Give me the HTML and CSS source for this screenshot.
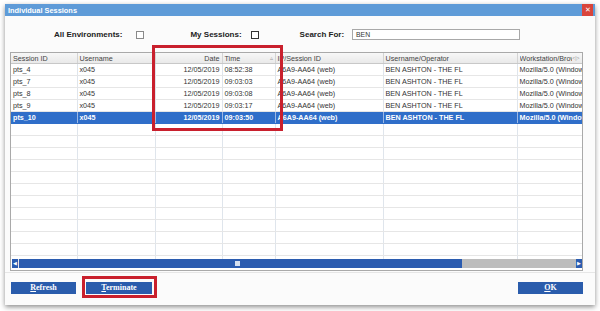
FILE: index.html
```html
<!DOCTYPE html>
<html lang="en">
<head>
  <meta charset="UTF-8">
  <meta name="viewport" content="width=device-width, initial-scale=1.0">
  <title>Individual Sessions</title>
  <link rel="stylesheet" href="styles.css">
</head>
<body>
  <!-- Dialog window -->
  <div class="window">
    <div class="titlebar">
      <span class="title">Individual Sessions</span>
      <span class="close">&#x2715;</span>
    </div>

    <!-- Filter options -->
    <div class="options">
      <label class="opt-label all-env">All Environments:</label>
      <span class="checkbox"></span>
      <label class="opt-label my-sessions">My Sessions:</label>
      <span class="checkbox dark"></span>
      <label class="opt-label search-label">Search For:</label>
      <div class="search-box">BEN</div>
    </div>

    <!-- Sessions grid -->
    <div class="grid">
      <div class="grid-body">
        <table class="sessions">
          <colgroup>
            <col style="width:66px">
            <col style="width:78px">
            <col style="width:67px">
            <col style="width:53px">
            <col style="width:108px">
            <col style="width:134px">
            <col style="width:65px">
          </colgroup>
          <thead>
            <tr>
              <th>Session ID</th>
              <th>Username</th>
              <th class="right">Date</th>
              <th>Time <span class="sort">&#x25B5;</span></th>
              <th>IP/Session ID</th>
              <th>Username/Operator</th>
              <th><div class="ws"><span class="ws-text">Workstation/Browser</span><span class="resize">&lt;|&gt;</span></div></th>
            </tr>
          </thead>
          <tbody id="rows"></tbody>
        </table>
      </div>
      <div class="hscroll">
        <span class="arrow left">&#x25C0;</span>
        <div class="thumb"><span class="grip"></span></div>
        <div class="track"></div>
        <span class="arrow right">&#x25B6;</span>
      </div>
    </div>

    <!-- Buttons -->
    <div class="footer">
      <button class="btn refresh"><u>R</u>efresh</button>
      <button class="btn terminate"><u>T</u>erminate</button>
      <button class="btn ok"><u>O</u>K</button>
    </div>
  </div>

  <!-- Annotation boxes -->
  <div class="mark mark-datetime"></div>
  <div class="mark mark-terminate"></div>

  <script>
    var sessions = [
      ['pts_4', 'x045', '12/05/2019', '08:52:38'],
      ['pts_7', 'x045', '12/05/2019', '09:03:03'],
      ['pts_8', 'x045', '12/05/2019', '09:03:08'],
      ['pts_9', 'x045', '12/05/2019', '09:03:17'],
      ['pts_10', 'x045', '12/05/2019', '09:03:50']
    ];
    var tbody = document.getElementById('rows');
    var html = '';
    sessions.forEach(function (s, i) {
      var cls = i === sessions.length - 1 ? ' class="selected"' : '';
      html += '<tr' + cls + '><td>' + s[0] + '</td><td>' + s[1] + '</td>' +
        '<td class="right">' + s[2] + '</td><td>' + s[3] + '</td>' +
        '<td>A6A9-AA64 (web)</td><td>BEN ASHTON - THE FL</td>' +
        '<td>Mozilla/5.0 (Window</td></tr>';
    });
    // empty filler rows
    for (var i = 0; i < 12; i++) {
      html += '<tr class="empty"><td></td><td></td><td></td><td></td><td></td><td></td><td></td></tr>';
    }
    tbody.innerHTML = html;
  </script>
</body>
</html>
```

FILE: styles.css
```css
/* Page */
body {
  margin: 0;
  padding: 0;
  background: #ffffff;
  font-family: "Liberation Sans", Arial, sans-serif;
  width: 600px;
  height: 311px;
  overflow: hidden;
  position: relative;
}

/* Dialog window */
.window {
  margin: 4px 5px 0 5px;
  width: 590px;
  height: 301px;
  background: #fbfbfb;
  box-shadow: 0 2px 5px rgba(0, 0, 0, 0.45);
  display: flex;
  flex-direction: column;
}
.titlebar {
  height: 12px;
  background: #5e9bd8;
  display: flex;
  justify-content: space-between;
  align-items: center;
  padding-left: 3px;
}
.title {
  color: #ffffff;
  font-size: 7.4px;
  font-weight: bold;
}
.close {
  width: 11px;
  height: 12px;
  margin-right: 2px;
  background: #d9453b;
  color: #ffffff;
  font-size: 7px;
  text-align: center;
  line-height: 12px;
}

/* Filter options */
.options {
  height: 36px;
  display: flex;
  align-items: center;
  padding-left: 49px;
  padding-top: 1px;
  box-sizing: border-box;
}
.opt-label {
  font-size: 8px;
  font-weight: bold;
  color: #222;
}
.checkbox {
  width: 6px;
  height: 6px;
  border: 1px solid #8a8a8a;
  background: #fff;
  margin-left: 14px;
}
.checkbox.dark {
  border-color: #333;
  margin-left: 9px;
}
.my-sessions {
  margin-left: 46px;
}
.search-label {
  margin-left: 41px;
}
.search-box {
  margin-left: 8px;
  width: 163px;
  height: 9px;
  border: 1px solid #a8a8a8;
  background: #fff;
  font-size: 6.8px;
  line-height: 9px;
  padding-left: 3px;
  color: #333;
}

/* Sessions grid */
.grid {
  margin: 0 12px 0 5px;
  height: 217px;
  border: 1px solid #a9a9a9;
  background: #fff;
  display: flex;
  flex-direction: column;
}
.grid-body {
  flex: 1;
  overflow: hidden;
}
.sessions {
  border-collapse: collapse;
  table-layout: fixed;
  width: 571px;
  font-size: 7.2px;
  color: #333;
}
.sessions th {
  height: 10px;
  padding: 0 2px;
  background: linear-gradient(#f7f7f7, #e9e9e9);
  border-right: 1px solid #d4d4d4;
  border-bottom: 1px solid #c8c8c8;
  font-weight: normal;
  text-align: left;
  white-space: nowrap;
  overflow: hidden;
  color: #444;
}
.sessions td {
  height: 11px;
  padding: 0 2px;
  border-right: 1px solid #dfe5ec;
  border-bottom: 1px solid #e6e6e6;
  white-space: nowrap;
  overflow: hidden;
}
.sessions .right {
  text-align: right;
}
.sort {
  float: right;
  color: #999;
  font-size: 6px;
}
.ws {
  display: flex;
  align-items: center;
}
.ws-text {
  flex: 1;
  overflow: hidden;
}
.resize {
  font-size: 5px;
  color: #999;
}
.sessions tr.selected td {
  background: #2f6ec9;
  color: #ffffff;
  font-weight: bold;
  border-bottom-color: #2f6ec9;
  border-right-color: #9cb8e4;
}

/* Horizontal scrollbar */
.hscroll {
  height: 9px;
  display: flex;
  margin: 0 0 2px 1px;
}
.arrow {
  width: 6px;
  background: #2b5cb0;
  color: #ffffff;
  font-size: 5px;
  line-height: 9px;
  text-align: center;
}
.thumb {
  width: 443px;
  background: #2b5cb0;
  border-left: 1px solid #e8e8e8;
  position: relative;
}
.grip {
  position: absolute;
  left: 216px;
  top: 2px;
  width: 5px;
  height: 5px;
  background: #d6e0f0;
}
.track {
  flex: 1;
  background: #bdbdbd;
}

/* Footer buttons */
.footer {
  display: flex;
  padding: 9px 12px 0 6px;
  border-top: 1px solid #e6e6e6;
  margin-top: 1px;
}
.btn {
  height: 12px;
  width: 65px;
  padding: 0;
  border: none;
  background: #2a5cac;
  color: #ffffff;
  font-family: "Liberation Serif", "Times New Roman", serif;
  font-weight: bold;
  font-size: 8px;
  line-height: 12px;
}
.terminate {
  width: 66px;
  margin-left: 10px;
}
.ok {
  margin-left: auto;
}

/* Red annotation boxes */
.mark {
  position: absolute;
  border: 3px solid #c9202d;
  box-sizing: border-box;
}
.mark-datetime {
  left: 152px;
  top: 45px;
  width: 131px;
  height: 86px;
}
.mark-terminate {
  left: 82px;
  top: 276px;
  width: 75px;
  height: 22px;
}
```
